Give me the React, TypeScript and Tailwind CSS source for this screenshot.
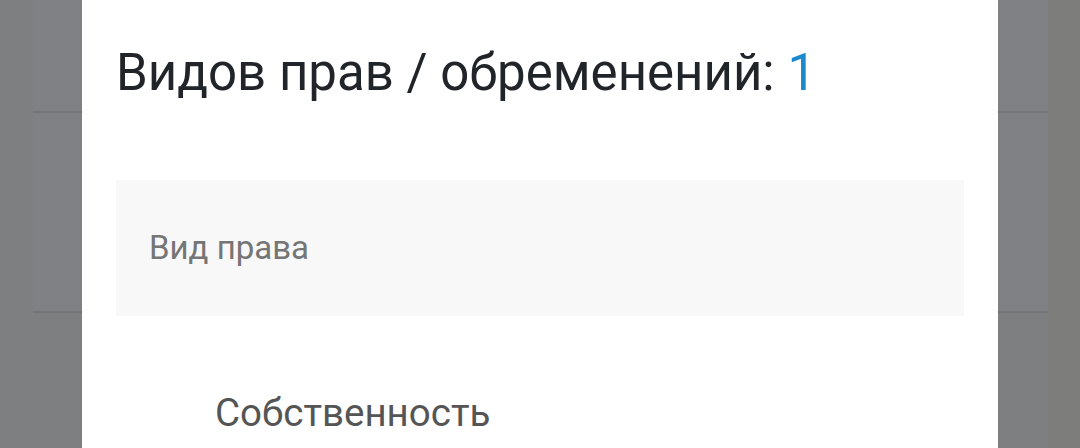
const SideStrip = () => (
  <div className="flex flex-col bg-[#808184]">
    <div className="h-[113px] border-b-2 border-[#747578]"></div>
    <div className="h-[200px] border-b-2 border-[#747578]"></div>
    <div className="flex-1"></div>
  </div>
);

export default function App() {
  return (
    <div
      className="flex h-[448px] w-[1080px] overflow-hidden bg-[#7e7f81]"
      style={{ fontFamily: "Roboto, 'Noto Sans', sans-serif" }}
    >
      <div className="w-[33px]"></div>
      <div className="w-[49px]">
        <SideStrip />
      </div>
      <div className="w-[916px] bg-white pl-[34px] pr-[34px] pt-[43px]">
        <h2 className="text-[51px] leading-[60px] text-[#212529]">
          Видов прав / обременений: <span className="text-[#1b8acd]">1</span>
        </h2>
        <div className="mt-[77px] flex h-[136px] items-center bg-[#f8f8f8] px-[33px]">
          <span className="text-[33px] text-[#757575]">Вид права</span>
        </div>
        <div className="pl-[99px] pt-[68px] text-[38.5px] text-[#555555]">Собственность</div>
      </div>
      <div className="w-[50px]">
        <SideStrip />
      </div>
      <div className="flex-1 bg-[#7d7e7c]"></div>
    </div>
  );
}
